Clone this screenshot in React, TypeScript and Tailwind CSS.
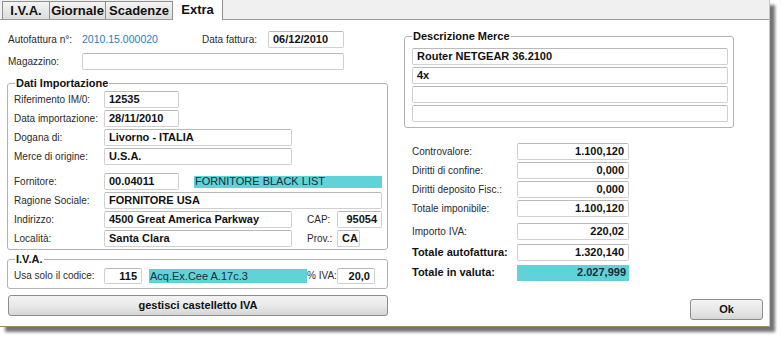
import React from 'react';

// Old-style Windows form: "Extra" tab of an autofattura dialog

interface BoxProps {
  w: string;
  h?: string;
  right?: boolean;
  children?: React.ReactNode;
}

const Box = ({ w, h = 'h-[17px]', right, children }: BoxProps) => (
  <div
    className={`${w} ${h} shrink-0 flex items-center overflow-hidden whitespace-nowrap rounded-[2px] border border-[#d0d0d0] border-t-[#b9b9b9] bg-white px-[4px] text-[11px] font-bold leading-none text-[#111] ${right ? 'justify-end' : ''}`}
  >
    {children}
  </div>
);

const Cyan = ({ w, h, right, children }: BoxProps) => (
  <div
    className={`${w} ${h} shrink-0 flex items-center whitespace-nowrap bg-[#5fd3d7] px-[1px] text-[11px] leading-none text-[#1a2a3a] ${right ? 'justify-end font-bold pr-[3px]' : ''}`}
  >
    {children}
  </div>
);

const Label = ({ w, bold, children }: { w: string; bold?: boolean; children: React.ReactNode }) => (
  <div
    className={`${w} shrink-0 whitespace-nowrap leading-none ${bold ? 'text-[11px] font-bold text-[#111]' : 'text-[10px] text-[#2b2b2b]'}`}
  >
    {children}
  </div>
);

const Group = ({ title, className, children }: { title: string; className: string; children: React.ReactNode }) => (
  <div className={`relative rounded-[3px] border border-[#b3b3b3] ${className}`}>
    <span className="absolute -top-[8px] left-[7px] bg-white px-[1px] text-[11px] font-bold leading-[14px] text-[#111]">
      {title}
    </span>
    {children}
  </div>
);

const Row = ({ className = '', children }: { className?: string; children: React.ReactNode }) => (
  <div className={`flex items-center ${className}`}>{children}</div>
);

const tabBase =
  'flex items-center justify-center border border-b-0 border-[#8f8f8f] text-[13px] font-bold leading-none text-[#111]';

export default function App() {
  const totals: { label: string; value: string; bold?: boolean; mt: string; cyan?: boolean }[] = [
    { label: 'Controvalore:', value: '1.100,120', mt: 'mt-[15px]' },
    { label: 'Diritti di confine:', value: '0,000', mt: 'mt-[2px]' },
    { label: 'Diritti deposito Fisc.:', value: '0,000', mt: 'mt-[2px]' },
    { label: 'Totale imponibile:', value: '1.100,120', mt: 'mt-[2px]' },
    { label: 'Importo IVA:', value: '220,02', mt: 'mt-[6px]' },
    { label: 'Totale autofattura:', value: '1.320,140', bold: true, mt: 'mt-[4px]' },
    { label: 'Totale in valuta:', value: '2.027,999', bold: true, cyan: true, mt: 'mt-[3px]' },
  ];

  return (
    <div className="h-[338px] w-[781px] bg-white font-['Liberation_Sans',Arial,sans-serif]">
      <div className="flex h-[327px] w-[770px] flex-col border-r border-b border-r-[#c4c4c4] border-b-[#9a8a5c] bg-white shadow-[5px_5px_3px_rgba(0,0,0,0.55)]">
        {/* Tabs */}
        <div className="flex h-[20px] shrink-0 items-end border-b border-[#9a9a9a] bg-[#f0f0f0] pl-[2px]">
          <div className={`${tabBase} h-[18px] w-[48px] bg-gradient-to-b from-[#f4f4f4] to-[#dcdcdc]`}>I.V.A.</div>
          <div className={`${tabBase} h-[18px] w-[56px] border-l-0 bg-gradient-to-b from-[#f4f4f4] to-[#dcdcdc]`}>Giornale</div>
          <div className={`${tabBase} h-[18px] w-[67px] border-l-0 bg-gradient-to-b from-[#f4f4f4] to-[#dcdcdc]`}>Scadenze</div>
          <div className={`${tabBase} relative -mb-[1px] h-[21px] w-[50px] border-l-0 bg-white pb-[2px]`}>Extra</div>
        </div>

        <div className="flex flex-1">
          {/* Left column */}
          <div className="flex w-[404px] shrink-0 flex-col pl-[7px]">
            <Row className="mt-[11px] h-[17px]">
              <div className="w-[75px] shrink-0 pl-[1px] text-[10px] leading-none text-[#2b2b2b]">Autofattura n°:</div>
              <div className="w-[120px] shrink-0 text-[10.5px] leading-none text-[#2a7cc0]">2010.15.000020</div>
              <Label w="w-[66px]">Data fattura:</Label>
              <Box w="w-[76px]">06/12/2010</Box>
            </Row>
            <Row className="mt-[5px] h-[17px]">
              <div className="w-[75px] shrink-0 pl-[1px] text-[10px] leading-none text-[#2b2b2b]">Magazzino:</div>
              <Box w="w-[262px]" />
            </Row>

            <Group title="Dati Importazione" className="mt-[13px] h-[167px] w-[381px] pl-[6px] pt-[7px]">
              <Row className="h-[17px]">
                <Label w="w-[90px]">Riferimento IM/0:</Label>
                <Box w="w-[75px]">12535</Box>
              </Row>
              <Row className="mt-[2px] h-[17px]">
                <Label w="w-[90px]">Data importazione:</Label>
                <Box w="w-[75px]">28/11/2010</Box>
              </Row>
              <Row className="mt-[2px] h-[17px]">
                <Label w="w-[90px]">Dogana di:</Label>
                <Box w="w-[188px]">Livorno - ITALIA</Box>
              </Row>
              <Row className="mt-[2px] h-[17px]">
                <Label w="w-[90px]">Merce di origine:</Label>
                <Box w="w-[188px]">U.S.A.</Box>
              </Row>
              <Row className="mt-[8px] h-[17px]">
                <Label w="w-[90px]">Fornitore:</Label>
                <Box w="w-[75px]">00.04011</Box>
                <div className="w-[15px] shrink-0" />
                <Cyan w="w-[188px]" h="h-[12px]">FORNITORE BLACK LIST</Cyan>
              </Row>
              <Row className="mt-[2px] h-[17px]">
                <Label w="w-[90px]">Ragione Sociale:</Label>
                <Box w="w-[278px]">FORNITORE USA</Box>
              </Row>
              <Row className="mt-[2px] h-[17px]">
                <Label w="w-[90px]">Indirizzo:</Label>
                <Box w="w-[188px]">4500 Great America Parkway</Box>
                <div className="w-[15px] shrink-0" />
                <Label w="w-[30px]">CAP:</Label>
                <Box w="w-[45px]" right>95054</Box>
              </Row>
              <Row className="mt-[2px] h-[17px]">
                <Label w="w-[90px]">Località:</Label>
                <Box w="w-[188px]">Santa Clara</Box>
                <div className="w-[15px] shrink-0" />
                <Label w="w-[30px]">Prov.:</Label>
                <Box w="w-[23px]">CA</Box>
              </Row>
            </Group>

            <Group title="I.V.A." className="mt-[9px] h-[30px] w-[381px] pl-[6px] pt-[8px]">
              <Row className="h-[16px]">
                <Label w="w-[90px]">Usa solo il codice:</Label>
                <Box w="w-[38px]" h="h-[16px]" right>115</Box>
                <div className="w-[7px] shrink-0" />
                <Cyan w="w-[158px]" h="h-[14px]">Acq.Ex.Cee A.17c.3</Cyan>
                <Label w="w-[30px]">% IVA:</Label>
                <Box w="w-[38px]" h="h-[16px]" right>20,0</Box>
              </Row>
            </Group>

            <button className="ml-[1px] mt-[6px] h-[21px] w-[380px] rounded-[3px] border border-[#8c8c8c] bg-gradient-to-b from-[#f3f3f3] via-[#e9e9e9] to-[#d6d6d6] text-[11px] font-bold leading-none text-[#111]">
              gestisci castelletto IVA
            </button>
          </div>

          {/* Right column */}
          <div className="flex flex-1 flex-col">
            <Group title="Descrizione Merce" className="mt-[16px] h-[92px] w-[330px] pl-[7px] pt-[11px]">
              <Box w="w-[316px]">Router NETGEAR 36.2100</Box>
              <div className="mt-[2px]"><Box w="w-[316px]">4x</Box></div>
              <div className="mt-[2px]"><Box w="w-[316px]" /></div>
              <div className="mt-[2px]"><Box w="w-[316px]" /></div>
            </Group>

            {totals.map((t) => (
              <Row key={t.label} className={`${t.mt} h-[17px] pl-[8px]`}>
                <Label w="w-[105px]" bold={t.bold}>{t.label}</Label>
                {t.cyan ? (
                  <Cyan w="w-[112px]" h="h-[16px]" right>{t.value}</Cyan>
                ) : (
                  <Box w="w-[112px]" right>{t.value}</Box>
                )}
              </Row>
            ))}

            <button className="mr-[6px] mt-[18px] h-[21px] w-[73px] self-end rounded-[3px] border border-[#8c8c8c] bg-gradient-to-b from-[#f3f3f3] via-[#e9e9e9] to-[#d6d6d6] text-[11px] font-bold leading-none text-[#111]">
              Ok
            </button>
          </div>
        </div>
      </div>
    </div>
  );
}
